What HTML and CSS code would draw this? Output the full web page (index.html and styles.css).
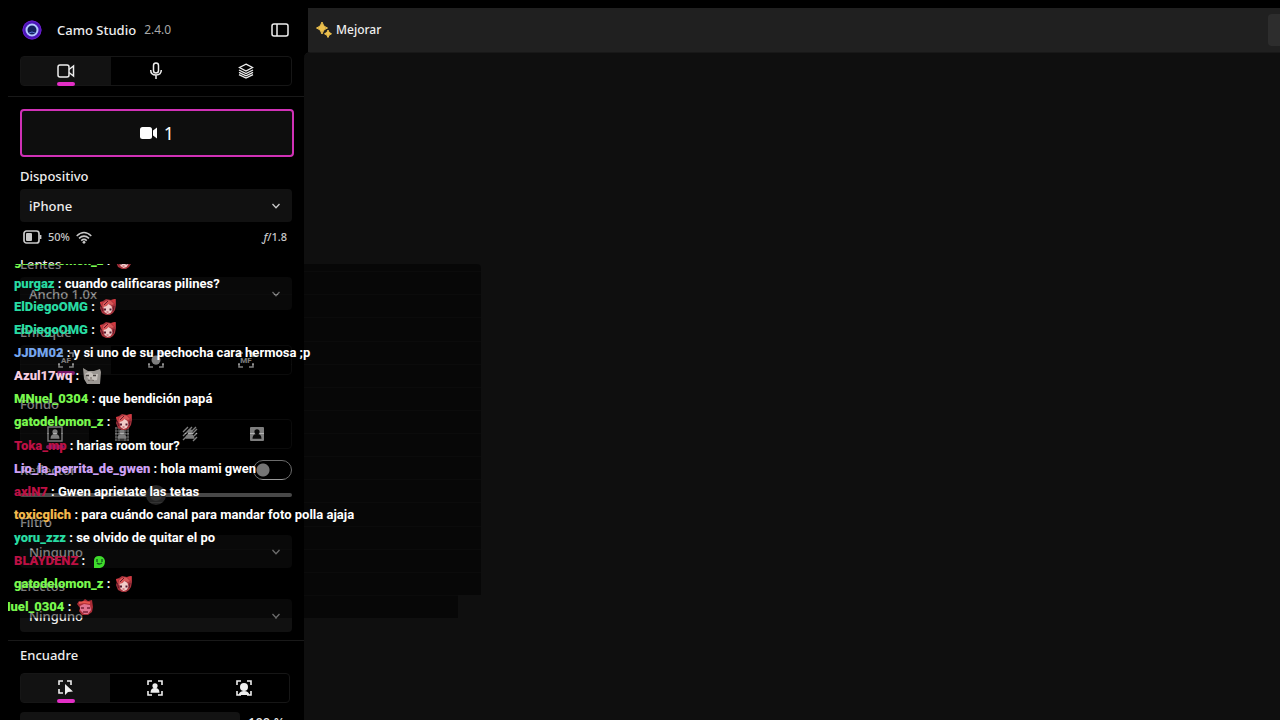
FILE: index.html
```html
<!DOCTYPE html>
<html lang="es">
<head>
<meta charset="utf-8">
<title>Camo Studio</title>
<link rel="stylesheet" href="styles.css">
</head>
<body>
<svg class="defs" aria-hidden="true">
  <symbol id="chevron" viewBox="0 0 10 10"><path d="M1.500 3 5 6.700 8.500 3" fill="none" stroke="currentColor" stroke-width="1.300"/></symbol>
  <symbol id="frame" viewBox="0 0 16 16"><path d="M1 5V1h4M11 1h4v4M15 11v4h-4M5 15H1v-4" fill="none" stroke="currentColor" stroke-width="1.600"/></symbol>
  <symbol id="person" viewBox="0 0 16 16"><circle cx="8" cy="5.800" r="2.600" fill="currentColor"/><path d="M3.500 12.800c0-3 1.300-4.800 4.500-4.800s4.500 1.800 4.500 4.800z" fill="currentColor"/></symbol>
  <symbol id="emote-girl" viewBox="0 0 18 18">
    <path d="M1 4l3-1 3-2 5 1 5-1v6l-1 5-2 3-3 2H7l-4-2-2-5 1-3z" fill="#a5323b"/>
    <path d="M4 5q4-4 8-2l3 3-2 1-3-1-4 3-3 1z" fill="#d85758"/>
    <path d="M12 2l4-1v5zM1 4l3 0-2 4z" fill="#d3393f"/>
    <path d="M4.500 9l3-1 2-2 3 2 1 4-2 3-3 1-3-2z" fill="#f1ccca"/>
    <path d="M5 10.500h2v2H5zM10.500 10.500h2v2h-2z" fill="#54192f"/>
    <path d="M7.500 14h2" stroke="#b33a4a"/>
    <path d="M2.500 8l1 5M15 8l-1 5M9 3l-4 4" stroke="#64182a" fill="none"/>
  </symbol>
  <symbol id="emote-pink" viewBox="0 0 18 18">
    <path d="M1 6l2-3 3 1 3-3 3 2 4-1 1 7-1 5-4 3H6l-3-4 1-3z" fill="#a92b35"/>
    <path d="M4 8l4-2 6 1 1 5-3 4H8l-4-4z" fill="#e27490"/>
    <path d="M5 10h3M11 10h3M7 14h5" stroke="#7a2038" stroke-width="1.300"/>
    <path d="M3 5l5-1 6 1" stroke="#e5564f" stroke-width="2" fill="none"/>
  </symbol>
  <symbol id="emote-cat" viewBox="0 0 18 18">
    <path d="M0 1l5 3h6l6-2 1 3-1 12H4L1 12z" fill="#9b9793"/>
    <path d="M2 7q5-4 8 0l5 0-1 6-7 1z" fill="#c6c1bc"/>
    <path d="M3 8.500h3M10 8.500h3" stroke="#45403d" stroke-width="1.300"/>
    <path d="M7 11h2M5 13.500q3-1 6 0" stroke="#6a625d" fill="none"/>
  </symbol>
  <symbol id="emote-green" viewBox="0 0 18 18">
    <path d="M4 16V9q0-5 5-5t6 5q0 6-5 7z" fill="#3fdc2c"/>
    <path d="M7 7v3M12 7v3M7 11q2 2 5 0" stroke="#12561b" stroke-width="1.300" fill="none"/>
  </symbol>
</svg>

<div class="app">
  <aside class="sidebar">
    <header class="brand">
      <svg class="logo" viewBox="0 0 20 20" aria-hidden="true"><circle cx="10" cy="10" r="9.500" fill="#4a16b8"/><circle cx="10" cy="10" r="9" fill="none" stroke="#6a1ccb"/><circle cx="10" cy="10" r="5.500" fill="#13205c" stroke="#b4c6ff" stroke-width="2"/><path d="M7 13q3-2 6 0" stroke="#5571d2" fill="none"/></svg>
      <h1>Camo Studio</h1><span class="version">2.4.0</span>
      <button class="icon-button" aria-label="Panel lateral"><svg width="18" height="14" viewBox="0 0 18 14"><rect x="1" y="1" width="16" height="12" rx="2" fill="none" stroke="currentColor" stroke-width="1.500"/><path d="M6 1v12" stroke="currentColor" stroke-width="1.500"/></svg></button>
    </header>

    <nav class="tabs main-tabs" aria-label="Fuentes">
      <button class="active" aria-label="Cámara"><svg width="18" height="14" viewBox="0 0 18 14"><g fill="none" stroke="currentColor" stroke-width="1.500"><rect x="1" y="1" width="11" height="12" rx="2"/><path d="M12 5.500 16.500 2v10L12 8.500"/></g></svg></button>
      <button aria-label="Micrófono"><svg width="14" height="18" viewBox="0 0 14 18"><g fill="none" stroke="currentColor" stroke-width="1.500"><rect x="4.500" y="1" width="5" height="10" rx="2.500"/><path d="M1.700 8q0 5 5.300 5t5.300-5M7 13v4"/></g></svg></button>
      <button aria-label="Superposiciones"><svg width="16" height="16" viewBox="0 0 16 16"><path d="M8 1.200 14.500 4.500 8 8 1.500 4.500zM1 7l7 3.500L15 7M1 9.300l7 3.500 7-3.500M1 11.600l7 3.500 7-3.500" fill="none" stroke="currentColor" stroke-width="1.300"/></svg></button>
    </nav>

    <section class="source">
      <button class="camera"><svg width="18" height="14" viewBox="0 0 18 14" aria-hidden="true"><rect y="1" width="12" height="12" rx="2.500" fill="currentColor"/><path d="M13 4.500 17 1.500v11L13 9.500z" fill="currentColor"/></svg>1</button>

      <div class="field device">
        <label for="device">Dispositivo</label>
        <div class="select"><select id="device"><option>iPhone</option></select><svg><use href="#chevron"/></svg></div>
      </div>
      <div class="status">
        <svg width="19" height="14" viewBox="0 0 19 14" aria-hidden="true"><rect x="1" y="1" width="15" height="12" rx="2.500" fill="none" stroke="currentColor" stroke-width="1.700"/><rect x="3" y="3" width="6" height="8" rx="1" fill="currentColor"/><path d="M17.500 5v4" stroke="currentColor" stroke-width="1.800"/></svg>
        <span>50%</span>
        <svg width="16" height="13" viewBox="0 0 16 13" aria-hidden="true"><g fill="none" stroke="currentColor" stroke-width="1.500"><path d="M.700 5Q8-2 15.300 5M3 7.400q5-4.500 10 0M5.200 9.600q2.800-2.400 5.600 0"/></g><circle cx="8" cy="11.300" r="1.400" fill="currentColor"/></svg>
        <span class="aperture"><i>ƒ</i>/1.8</span>
      </div>

      <div class="field lens">
        <label for="lens">Lentes</label>
        <div class="select"><select id="lens"><option>Ancho 1.0x</option></select><svg><use href="#chevron"/></svg></div>
      </div>

      <div class="field focus">
        <h2>Enfoque</h2>
        <div class="tabs">
          <button class="active" aria-label="Enfoque automático"><svg class="glyph"><use href="#frame"/><text x="8" y="11" text-anchor="middle">AF</text></svg></button>
          <button aria-label="Enfoque en rostro"><svg class="glyph" viewBox="0 0 16 16"><use href="#frame"/><circle cx="8" cy="8" r="4.500" fill="currentColor"/></svg></button>
          <button aria-label="Enfoque manual"><svg class="glyph"><use href="#frame"/><text x="8" y="11" text-anchor="middle">MF</text></svg></button>
        </div>
      </div>

      <div class="field background">
        <h2>Fondo</h2>
        <div class="tabs">
          <button class="active" aria-label="Original"><svg class="glyph" viewBox="0 0 16 16"><rect x="1" y="1" width="14" height="14" fill="none" stroke="currentColor" stroke-width="1.400"/><use href="#person"/></svg></button>
          <button aria-label="Desenfoque"><svg class="glyph" viewBox="0 0 16 16"><path d="M1 2h14M1 5h14M1 8h14M1 11h14M1 14h14M2 1v14M5 1v14M11 1v14M14 1v14" stroke="currentColor" stroke-width=".8"/><use href="#person"/></svg></button>
          <button aria-label="Privacidad"><svg class="glyph" viewBox="0 0 16 16"><path d="M1 6l5-5M1 10l9-9M1 14 14 1M10 8l5-5M12 10l3-3M11 15l4-4" stroke="currentColor" stroke-width="1.400"/><use href="#person"/></svg></button>
          <button aria-label="Reemplazar"><svg class="glyph" viewBox="0 0 16 16"><rect x="1" y="1" width="14" height="14" rx="1" fill="currentColor"/><g color="#111"><use href="#person"/></g></svg></button>
        </div>
      </div>

      <div class="toggle-row">
        <label for="spot">Reflector</label>
        <input class="switch" id="spot" type="checkbox">
      </div>
      <input class="slider" type="range" min="0" max="100" value="50" aria-label="Intensidad del reflector">

      <div class="field filter">
        <label for="filter">Filtro</label>
        <div class="select"><select id="filter"><option>Ninguno</option></select><svg><use href="#chevron"/></svg></div>
      </div>
      <div class="field effects">
        <label for="effects">Efectos</label>
        <div class="select"><select id="effects"><option>Ninguno</option></select><svg><use href="#chevron"/></svg></div>
      </div>
    </section>

    <section class="framing">
      <h2>Encuadre</h2>
      <div class="tabs">
        <button class="active" aria-label="Manual"><svg class="glyph" viewBox="0 0 16 16"><path d="M1 5V1h4M9 1h4v4M1 9v4h4" fill="none" stroke="currentColor" stroke-width="1.600"/><path d="M7 4v11l3-3 5-.500z" fill="currentColor"/></svg></button>
        <button aria-label="Persona"><svg class="glyph" viewBox="0 0 16 16"><use href="#frame"/><use href="#person"/></svg></button>
        <button aria-label="Rostro"><svg class="glyph" viewBox="0 0 16 16"><use href="#frame"/><circle cx="8" cy="7" r="4" fill="currentColor"/><path d="M2.500 15q1-4 5.500-4t5.500 4z" fill="currentColor"/></svg></button>
      </div>
      <div class="zoom-row"><div class="zoom-track"></div><output>100 %</output></div>
    </section>
  </aside>

  <main class="stage">
    <div class="toolbar">
      <button class="improve"><svg width="16" height="16" viewBox="0 0 16 16" aria-hidden="true"><path d="M6 0Q7 5 11.500 6 7 7 6 12 5 7 .5 6 5 5 6 0zM12 8q.5 3 3.500 3.800-3 .7-3.500 3.700-.500-3-3.500-3.700Q11.500 11 12 8z" fill="#ecc04d" stroke="#ecc04d"/></svg>Mejorar</button>
      <button class="edge" aria-label="Más"></button>
    </div>
    <div class="preview"></div>
  </main>
</div>

<div class="chat">
  <ul>
    <li><b class="lime">gatodelomon_z</b> : <svg><use href="#emote-girl"/></svg></li>
    <li><b class="teal">purgaz</b> : cuando calificaras pilines?</li>
    <li><b class="teal">ElDiegoOMG</b> : <svg><use href="#emote-girl"/></svg></li>
    <li><b class="teal">ElDiegoOMG</b> : <svg><use href="#emote-girl"/></svg></li>
    <li><b class="blue">JJDM02</b> : y si uno de su pechocha cara hermosa ;p</li>
    <li><b class="rose">Azul17wq</b> : <svg><use href="#emote-cat"/></svg></li>
    <li><b class="lime">MNuel_0304</b> : que bendición papá</li>
    <li><b class="lime">gatodelomon_z</b> : <svg><use href="#emote-girl"/></svg></li>
    <li><b class="crimson">Toka_mp</b> : harias room tour?</li>
    <li><b class="violet">Lio_la_perrita_de_gwen</b> : hola mami gwen</li>
    <li><b class="crimson">axlN7</b> : Gwen aprietate las tetas</li>
    <li><b class="amber">toxicglich</b> : para cuándo canal para mandar foto polla ajaja</li>
    <li><b class="teal">yoru_zzz</b> : se olvido de quitar el po</li>
    <li><b class="crimson">BLAYDENZ</b> : <svg><use href="#emote-green"/></svg></li>
    <li><b class="lime">gatodelomon_z</b> : <svg><use href="#emote-girl"/></svg></li>
    <li class="entering"><b class="lime">MNuel_0304</b> : <svg><use href="#emote-pink"/></svg></li>
  </ul>
</div>
</body>
</html>
```

FILE: styles.css
```css
* { box-sizing: border-box; }

body {
  margin: 0;
  height: 100vh;
  overflow: hidden;
  background: #000;
  color: #eee;
  font: 13px/20px "Noto Sans", "Open Sans", sans-serif;
}

button, select, input { margin: 0; font: inherit; color: inherit; }
button { border: 0; padding: 0; background: none; }
h1, h2 { margin: 0; font-size: 13px; font-weight: 500; }
label { display: block; font-weight: 500; }
.defs { display: none; }

.app {
  display: flex;
  height: 100vh;
  padding: 8px 0 0 8px;
}

/* Sidebar */
.sidebar {
  flex: 0 0 296px;
  overflow: hidden;
}

.brand {
  display: flex;
  align-items: center;
  height: 44px;
  padding: 0 15px 0 14px;
}
.logo { width: 20px; height: 20px; margin-right: 15px; }
.version { margin-left: 8px; font-size: 12px; color: #a9a9a9; }
.icon-button { display: flex; margin-left: auto; }

.tabs {
  position: relative;
  display: flex;
  height: 30px;
  border: 1px solid #161616;
  border-radius: 4px;
}
.tabs button {
  position: relative;
  display: flex;
  flex: 1;
  align-items: center;
  justify-content: center;
}
.tabs .active { background: #121212; }
.tabs .active::after {
  content: "";
  position: absolute;
  bottom: -1px;
  left: calc(50% - 9px);
  width: 18px;
  height: 4px;
  border-radius: 2px;
  background: #e32fc6;
}
.main-tabs { margin: 4px 12px 10px; }
.glyph { width: 16px; height: 16px; }
.glyph text { font: bold 8px Roboto, sans-serif; fill: currentColor; }

.source {
  padding: 12px 12px 8px;
  border-top: 1px solid #191919;
}
.camera {
  display: flex;
  align-items: center;
  justify-content: center;
  gap: 6px;
  width: 274px;
  height: 48px;
  border: 2px solid #d031b6;
  border-radius: 4px;
  background: #0e0e0e;
  color: #fff;
  font-size: 18px;
}

.device { margin-top: 9px; }
.select { position: relative; margin-top: 3px; }
.select select {
  display: block;
  width: 100%;
  height: 33px;
  padding: 0 9px;
  border: 0;
  border-radius: 4px;
  background: #111;
  appearance: none;
  font-weight: 500;
}
.select svg {
  position: absolute;
  top: 12px;
  right: 11px;
  width: 10px;
  height: 10px;
  color: #ccc;
}

.status {
  display: flex;
  align-items: center;
  gap: 6px;
  margin-top: 5px;
  padding: 0 5px 0 3px;
  font-size: 11px;
  font-weight: 500;
  color: #c8c8c8;
}
.aperture { margin-left: auto; }

.lens { margin-top: 7px; }
.focus { margin-top: 12px; }
.focus .tabs { margin-top: 3px; }
.background { margin-top: 19px; }
.background .tabs { margin-top: 5px; }

.toggle-row {
  display: flex;
  justify-content: space-between;
  margin-top: 11px;
}
.switch {
  width: 39px;
  height: 20px;
  border: 1px solid #ccc;
  border-radius: 10px;
  appearance: none;
  background: radial-gradient(circle at 9px 9px, #ddd 6px, transparent 7px);
}
.slider {
  display: block;
  width: 100%;
  height: 20px;
  margin-top: 5px;
  appearance: none;
  background: none;
}
.slider::-webkit-slider-runnable-track { height: 4px; border-radius: 2px; background: #888; }
.slider::-webkit-slider-thumb {
  width: 20px;
  height: 20px;
  margin-top: -8px;
  border: 4px solid #444;
  border-radius: 50%;
  appearance: none;
  background: #606060;
}
.filter { margin-top: 7px; }
.effects { margin-top: 8px; }

.framing { padding: 4px 12px 0; border-top: 1px solid #191919; }
.framing .tabs { width: 270px; margin-top: 8px; }
.zoom-row { display: flex; gap: 8px; margin-top: 9px; }
.zoom-track { width: 220px; height: 32px; border-radius: 4px; background: #131313; }
.zoom-row output { font-weight: 500; }

/* Stage */
.stage { display: flex; flex: 1; flex-direction: column; }
.toolbar {
  display: flex;
  align-items: center;
  justify-content: space-between;
  height: 44px;
  margin-left: 4px;
  background: #202020;
}
.improve {
  display: flex;
  align-items: center;
  gap: 4px;
  padding-left: 8px;
  font-size: 12px;
  font-weight: 500;
}
.edge { width: 12px; height: 32px; border-radius: 4px 0 0 4px; background: #2d2d2d; }
.preview { flex: 1; border-top: 1px solid #181818; border-radius: 6px 0 0; background: #0f0f0f; }

/* Chat overlay floating above the application */
.chat {
  position: absolute;
  top: 264px;
  left: 8px;
  display: flex;
  flex-direction: column;
  justify-content: flex-end;
  width: 473px;
  height: 354px;
  overflow: hidden;
  border-radius: 4px 4px 0 0;
  color: #fff;
  font: bold 13px/20px Roboto, sans-serif;
}
.chat ul {
  display: grid;
  flex: 0 0 370px;
  grid-auto-rows: 1fr;
  margin: 0;
  padding: 0;
  list-style: none;
}
.chat li {
  display: flex;
  align-items: center;
  padding: 1px 0 0 6px;
  border-top: 1px solid rgba(0, 0, 0, .25);
  background: rgba(0, 0, 0, .47);
  background-clip: padding-box;
  white-space: pre;
}
.chat svg { width: 18px; height: 18px; margin-left: 1px; }
.chat .entering { margin: 0 23px 0 -24px; }
.lime { color: #79f84e; }
.teal { color: #28dba2; }
.blue { color: #75a6ee; }
.rose { color: #f7cde0; }
.crimson { color: #bd1044; }
.violet { color: #cda0f5; }
.amber { color: #f3b84c; }
```
